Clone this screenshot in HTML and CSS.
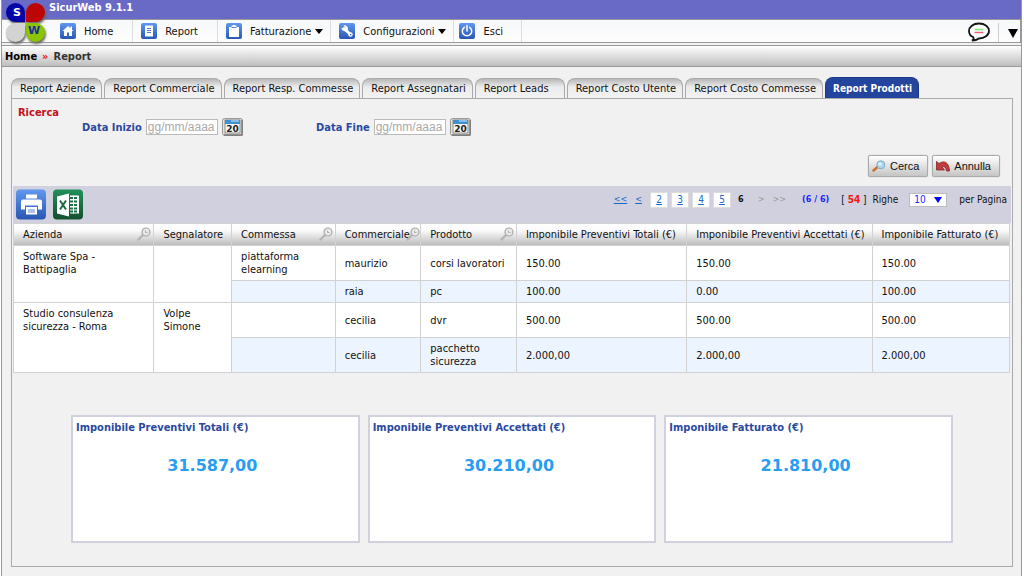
FILE: index.html
```html
<!DOCTYPE html>
<html lang="it">
<head>
<meta charset="utf-8">
<meta name="viewport" content="width=device-width, initial-scale=1">
<title>SicurWeb 9.1.1</title>
<link rel="stylesheet" href="styles.css">
</head>
<body>
<svg width="0" height="0" class="defs" aria-hidden="true">
  <defs>
    <linearGradient id="blue" x1="0" y1="0" x2="0" y2="1"><stop offset="0" stop-color="#6098ee"/><stop offset="1" stop-color="#2857b4"/></linearGradient>
    <linearGradient id="green" x1="0" y1="0" x2="0" y2="1"><stop offset="0" stop-color="#219058"/><stop offset="1" stop-color="#14502e"/></linearGradient>
    <symbol id="lens" viewBox="0 0 14 14"><path d="M1.5 12.5 6 8" stroke="#b4b4b4" stroke-width="2.4" stroke-linecap="round"/><circle cx="9" cy="5" r="4" fill="#e9e9e9" stroke="#a9a9a9" stroke-width="1.2"/><path d="M8.5 3.5v2h2" fill="none" stroke="#aaa" stroke-width=".9"/></symbol>
    <symbol id="calendar" viewBox="0 0 21 18"><rect x=".5" y=".5" width="20" height="17" rx="2" fill="#e4e2dd" stroke="#999"/><path d="M20 2v15H2" fill="none" stroke="#777" stroke-width="1.4"/><rect x="3" y="2" width="15" height="13" fill="#f7f7f7" stroke="#777" stroke-width=".8"/><rect x="3" y="2" width="15" height="4" fill="#4090cf"/><path d="M9 3h8" stroke="#b8dcf5" stroke-width="1.2"/><text x="10.5" y="14" text-anchor="middle" font-family="DejaVu Sans" font-size="9" font-weight="bold" fill="#222">20</text></symbol>
  </defs>
</svg>
<div class="app">
  <header class="titlebar">
    <h1 class="title">SicurWeb 9.1.1</h1>
    <svg class="logo" viewBox="0 0 44 46" role="img" aria-label="SicurWeb">
      <g class="petals">
        <path d="M20 21H11A9.500 9.500 0 1 1 20 12Z" fill="#0606a8"/>
        <path d="M21 21V12A9.500 9.500 0 1 1 30 21Z" fill="#bd0505"/>
        <path d="M20 22V31A9.500 9.500 0 1 1 11 22Z" fill="#d3d3d3"/>
        <path d="M21 22H30A9.500 9.500 0 1 1 21 31Z" fill="#8cc400"/>
      </g>
      <text x="12" y="15" text-anchor="middle" class="logo-letter logo-letter-s">S</text>
      <text x="29" y="33" text-anchor="middle" class="logo-letter logo-letter-w">W</text>
    </svg>
  </header>
  <nav class="menu" aria-label="Menu principale">
    <a class="menu-item" href="#home"><svg class="menu-icon" viewBox="0 0 16 16"><rect width="16" height="16" rx="2" fill="url(#blue)"/><path d="M2.500 8 8 3l2.500 2.200V3.500H12v3.200L13.500 8H12v5H9V9.500H7V13H4V8Z" fill="#fff"/></svg>Home</a>
    <a class="menu-item" href="#report"><svg class="menu-icon" viewBox="0 0 16 16"><rect width="16" height="16" rx="2" fill="url(#blue)"/><path d="M4 2.500h8v11H4Z" fill="#fff"/><path d="M6 5.500h4M6 7.500h4M6 9.500h4" stroke="#487fd4"/></svg>Report</a>
    <button type="button" class="menu-item menu-drop"><svg class="menu-icon" viewBox="0 0 16 16"><rect width="16" height="16" rx="2" fill="url(#blue)"/><path d="M3 4h2.500V2.500h1.500V2h2v.5h1.500V4H13v10H3Z" fill="#fff"/><path d="M5.500 4.500h5" stroke="#487fd4"/></svg>Fatturazione<svg class="caret" viewBox="0 0 8 5"><path d="M0 0h8L4 5Z"/></svg></button>
    <button type="button" class="menu-item menu-drop"><svg class="menu-icon" viewBox="0 0 16 16"><rect width="16" height="16" rx="2" fill="url(#blue)"/><path d="M5 5.500 11.500 11.500" stroke="#fff" stroke-width="3" stroke-linecap="round"/><path d="M2.500 4.500 5 6.500 6.500 5 4.500 2.500A3.500 3.500 0 0 1 9 6.500 3.500 3.500 0 0 1 2.500 4.500Z" fill="#fff"/><circle cx="11.500" cy="11.500" r="2.200" fill="#fff"/><circle cx="11.700" cy="11.700" r=".8" fill="#3569c5"/></svg>Configurazioni<svg class="caret" viewBox="0 0 8 5"><path d="M0 0h8L4 5Z"/></svg></button>
    <a class="menu-item menu-exit" href="#esci"><svg class="menu-icon" viewBox="0 0 16 16"><rect width="16" height="16" rx="2" fill="url(#blue)"/><path d="M5.300 4.300a4.700 4.700 0 1 0 5.400 0M8 2.500v5.500" fill="none" stroke="#fff" stroke-width="1.500" stroke-linecap="round"/></svg>Esci</a>
    <div class="menu-tools">
      <button type="button" class="tool" aria-label="Messaggi"><svg width="22" height="20" viewBox="0 0 22 20"><path d="M4 18.500C6 17.500 6 16 5 15 1.500 13.500 1 11 1 9 1 5 5 1.500 11 1.500S21 5 21 9s-4.500 7.500-10 7.500C9 18 6.500 18.500 4 18.500Z" fill="#fff" stroke="#151515" stroke-width="1.800"/><path d="M6.500 7.500h9" stroke="#79ef70" stroke-width="1.500"/><path d="M6.500 10.500h9" stroke="#f2607c" stroke-width="1.500"/></svg></button>
      <button type="button" class="tool tool-more" aria-label="Altro"><svg width="10" height="9" viewBox="0 0 10 9"><path d="M0 0h10L5 9Z"/></svg></button>
    </div>
  </nav>
  <div class="crumbs"><a href="#home">Home</a><span class="crumb-sep">»</span><span>Report</span></div>
  <main class="content">
    <nav class="tabs" aria-label="Report">
      <a class="tab" href="#aziende">Report Aziende</a>
      <a class="tab" href="#commerciale">Report Commerciale</a>
      <a class="tab" href="#resp">Report Resp. Commesse</a>
      <a class="tab" href="#assegnatari">Report Assegnatari</a>
      <a class="tab tab-wide" href="#leads">Report Leads</a>
      <a class="tab" href="#utente">Report Costo Utente</a>
      <a class="tab" href="#commesse">Report Costo Commesse</a>
      <a class="tab tab-active" href="#prodotti" aria-current="page">Report Prodotti</a>
    </nav>
    <div class="panel">
      <form class="search">
        <h2 class="legend">Ricerca</h2>
        <div class="fields">
          <div class="field field-start"><label for="inizio">Data Inizio</label><input id="inizio" type="text" placeholder="gg/mm/aaaa"><button type="button" class="cal" aria-label="Scegli data inizio"><svg width="21" height="18"><use href="#calendar"/></svg></button></div>
          <div class="field"><label for="fine">Data Fine</label><input id="fine" type="text" placeholder="gg/mm/aaaa"><button type="button" class="cal" aria-label="Scegli data fine"><svg width="21" height="18"><use href="#calendar"/></svg></button></div>
        </div>
        <div class="actions">
          <button type="button" class="btn"><svg width="14" height="12" viewBox="0 0 14 12"><path d="M1.500 10.500 5 7.500" stroke="#c8752d" stroke-width="2.600" stroke-linecap="round"/><circle cx="8.800" cy="4.800" r="4" fill="#a9d8f4" stroke="#86a8bf"/><circle cx="8" cy="4" r="1.800" fill="#dff3ff"/></svg>Cerca</button>
          <button type="button" class="btn"><svg width="14" height="12" viewBox="0 0 14 12"><path d="M.5 1.500 3 3.500C7 .5 13 1 13.500 11L10.500 11C10 7 8 6 6 7L8.500 10H.5Z" fill="#c13c3f" stroke="#842528" stroke-width=".8"/></svg>Annulla</button>
        </div>
      </form>
      <div class="toolbar">
        <button type="button" class="export" aria-label="Stampa"><svg viewBox="0 0 30 30"><rect width="30" height="30" rx="4" fill="url(#blue)"/><path d="M10 5h11v4H10ZM7 10h17q2 0 2 2v8h-4v-4H9v4H5v-8q0-2 2-2Z" fill="#fff"/><path d="M10 17.500h11V25H10Z" fill="#fff"/><path d="M12 20.500h7M12 22.500h7" stroke="#5788d8"/></svg></button>
        <button type="button" class="export" aria-label="Esporta in Excel"><svg viewBox="0 0 30 30"><rect width="30" height="30" rx="4" fill="url(#green)"/><path d="M4 7 16 4V27L4 24Z" fill="#fff"/><path d="M17 6h9v18h-9Z" fill="#fff"/><path d="M17 8.500h7M17 12h7M17 15.500h7M17 19h7M17 22h7" stroke="#1c7044" stroke-width="1.800"/><path d="M20.500 6v18" stroke="#fff"/><path d="m7 11 6 9M13 11l-6 9" stroke="#1c6c42" stroke-width="2"/></svg></button>
        <div class="pager">
          <a class="pg-first" href="#p1">&lt;&lt;</a><a class="pg-prev" href="#p5">&lt;</a>
          <span class="pages"><a href="#p2">2</a><a href="#p3">3</a><a href="#p4">4</a><a href="#p5">5</a></span>
          <b class="pg-now">6</b><span class="off pg-next">&gt;</span><span class="off">&gt;&gt;</span>
          <b class="range">(6 / 6)</b><span class="total">[ <b>54</b> ]</span>
          <label for="righe">Righe</label>
          <span class="select"><select id="righe"><option>10</option><option>20</option><option>50</option></select></span>
          <span>per Pagina</span>
        </div>
      </div>
      <table class="grid">
        <colgroup><col class="c-azienda"><col class="c-segnalatore"><col class="c-commessa"><col class="c-commerciale"><col class="c-prodotto"><col class="c-totali"><col class="c-accettati"><col class="c-fatturato"></colgroup>
        <thead>
          <tr>
            <th scope="col"><div class="head">Azienda<svg class="lens"><use href="#lens"/></svg></div></th>
            <th scope="col">Segnalatore</th>
            <th scope="col"><div class="head">Commessa<svg class="lens"><use href="#lens"/></svg></div></th>
            <th scope="col"><div class="head">Commerciale<svg class="lens"><use href="#lens"/></svg></div></th>
            <th scope="col"><div class="head">Prodotto<svg class="lens"><use href="#lens"/></svg></div></th>
            <th scope="col">Imponibile Preventivi Totali (€)</th>
            <th scope="col">Imponibile Preventivi Accettati (€)</th>
            <th scope="col">Imponibile Fatturato (€)</th>
          </tr>
        </thead>
        <tbody>
          <tr class="tall"><td rowspan="2" class="group">Software Spa - Battipaglia</td><td rowspan="2" class="group"></td><td>piattaforma elearning</td><td>maurizio</td><td>corsi lavoratori</td><td>150.00</td><td>150.00</td><td>150.00</td></tr>
          <tr class="alt"><td></td><td>raia</td><td>pc</td><td>100.00</td><td>0.00</td><td>100.00</td></tr>
          <tr class="tall"><td rowspan="2" class="group">Studio consulenza sicurezza - Roma</td><td rowspan="2" class="group">Volpe Simone</td><td></td><td>cecilia</td><td>dvr</td><td>500.00</td><td>500.00</td><td>500.00</td></tr>
          <tr class="alt tall"><td></td><td>cecilia</td><td>pacchetto sicurezza</td><td>2.000,00</td><td>2.000,00</td><td>2.000,00</td></tr>
        </tbody>
      </table>
      <div class="cards">
        <section class="card"><h2>Imponibile Preventivi Totali (€)</h2><p>31.587,00</p></section>
        <section class="card"><h2>Imponibile Preventivi Accettati (€)</h2><p>30.210,00</p></section>
        <section class="card"><h2>Imponibile Fatturato (€)</h2><p>21.810,00</p></section>
      </div>
    </div>
  </main>
</div>
</body>
</html>
```
FILE: styles.css
```css
* { box-sizing: border-box; }
body { margin: 0; background: #fff; color: #111; font: 11px/13px "DejaVu Sans Condensed", "DejaVu Sans", "Noto Sans", sans-serif; }
h1, h2, p { margin: 0; font-size: inherit; }
a { color: inherit; text-decoration: none; }
button { margin: 0; padding: 0; border: 0; background: none; color: inherit; font: inherit; cursor: pointer; }
svg { display: block; flex: none; }
.defs { position: absolute; }
.app { display: flex; flex-direction: column; min-height: 100vh; margin: 0 2px 0 1px; border: solid #999; border-width: 0 1px; background: #f1f1f1; }

.titlebar { position: relative; height: 19px; background: #6969c6; color: #fff; }
.title { padding-left: 47px; line-height: 15px; font-weight: bold; }
.logo { position: absolute; left: 3px; top: 1px; width: 44px; height: 46px; z-index: 1; overflow: visible; }
.petals { filter: drop-shadow(1px 2px 1px #666); }
.logo-letter { font: bold 11px "DejaVu Sans", sans-serif; }
.logo-letter-s { fill: #fff; }
.logo-letter-w { fill: #17329b; }

.menu { display: flex; height: 24px; border: 1px solid #999; border-left: 0; background: linear-gradient(#f7f8fa, #fdfdfd); padding-left: 50px; }
.menu-item { display: flex; align-items: center; gap: 8px; padding: 0 19px 0 8px; border-right: 1px solid #ddd; white-space: nowrap; }
.menu-icon { width: 16px; height: 16px; }
.menu-drop { padding-right: 7px; }
.caret { width: 8px; height: 5px; margin-left: -4px; }
.menu-exit { padding: 0 18px 0 5px; }
.menu-tools { display: flex; align-items: flex-end; margin-left: auto; }
.tool { padding-right: 8px; }
.tool-more { padding: 6px 2px 4px 9px; border-left: 1px solid #ccc; }

.crumbs { display: flex; align-items: center; gap: 5px; height: 22px; margin-top: 2px; padding-left: 3px; border: solid #999; border-width: 1px 0; background: linear-gradient(#fff, #bebebe); font-weight: bold; color: #333; }
.crumbs a { color: #000; }
.crumb-sep { color: #e11; }

.content { display: flex; flex: 1; flex-direction: column; padding: 10px 8px 9px 9px; }
.tabs { display: flex; align-items: flex-end; gap: 2px; height: 21px; }
.tab { height: 20px; padding: 3px 6px 3px 8px; border: 1px solid #aaa; border-bottom: 0; border-radius: 8px 8px 0 0; background: linear-gradient(#b8b8b8, #ececec 8px, #f2f2f2); white-space: nowrap; }
.tab-wide { padding-right: 15px; }
.tab-active { height: 22px; padding: 4px 6px 4px 7px; border-color: #1c3884; background: #24459d; color: #fff; font-size: 10px; font-weight: bold; margin-bottom: -1px; }
.panel { flex: 1; padding: 0 1px; border: 1px solid #aaa; }

.search { display: flex; flex-direction: column; height: 87px; padding: 7px 11px 9px 5px; }
.legend { color: #c5101b; }
.fields { display: flex; padding-left: 64px; margin-top: -1px; color: #2b49a0; font-weight: bold; }
.field { display: flex; align-items: center; gap: 4px; }
.field-start { width: 234px; }
.field input { width: 72px; height: 16px; padding: 0 1px; border: 1px solid #bbb; background: #fff; font: 12px/14px "Liberation Sans", sans-serif; }
.field input::placeholder { color: #aaa; }
.actions { display: flex; justify-content: flex-end; gap: 4px; margin-top: auto; }
.btn { display: flex; align-items: center; gap: 4px; height: 22px; padding: 0 8px 0 3px; border: 1px solid #aaa; border-radius: 2px; background: linear-gradient(#fff, #c5c5c5); color: #111; font: 11px/13px "Liberation Sans", sans-serif; box-shadow: 0 0 1px #999; }

.toolbar { display: flex; align-items: flex-start; gap: 7px; height: 37px; padding: 3px 4px 0 3px; background: #d1d0de; }
.export, .export svg { width: 30px; height: 31px; }
.pager { display: flex; align-items: center; margin: 2px 0 0 auto; height: 17px; font-size: 10px; white-space: nowrap; }
.pager a { color: #1769c9; text-decoration: underline; }
.pg-first, .pg-prev { margin-right: 8px; font-size: 9px; }
.pages { display: flex; gap: 3px; }
.pages a { width: 18px; height: 16px; background: #fff; border: 1px solid #ddd; text-align: center; line-height: 14px; }
.pg-now { margin: 0 14px 0 7px; font-size: 9px; }
.off { color: #999; font-size: 9px; }
.pg-next { margin-right: 8px; }
.range { margin-left: 16px; color: #22f; font-size: 9px; }
.total { margin: 0 6px 0 12px; }
.total b { color: #f11; }
.select { position: relative; margin: 0 12px 0 11px; }
.select::after { content: ""; position: absolute; right: 5px; top: 4px; border: 4px solid transparent; border-top: 6px solid #00f; border-bottom: 0; pointer-events: none; }
.select select { display: block; appearance: none; width: 38px; height: 14px; padding: 0 4px; border: 1px solid #bbb; border-radius: 0; background: #fff; color: #22f; font: inherit; line-height: 12px; }

.grid { width: calc(100% - 1px); table-layout: fixed; border-collapse: collapse; background: #fff; }
.c-azienda { width: 14.1%; }
.c-segnalatore { width: 7.8%; }
.c-commessa { width: 10.4%; }
.c-commerciale { width: 8.6%; }
.c-prodotto { width: 9.6%; }
.c-totali { width: 17.1%; }
.c-accettati { width: 18.6%; }
.c-fatturato { width: 13.8%; }
.grid th, .grid td { padding: 4px 9px; border: 1px solid #d2d2d2; text-align: left; font-weight: normal; }
.grid thead { background: linear-gradient(#fff, #fafafa 30%, #b9b9b9); }
.grid th { height: 22px; white-space: nowrap; }
.grid td { height: 22px; vertical-align: middle; }
.grid .tall td { height: 35px; }
.grid td.group { vertical-align: top; }
.alt td { background: #ebf4ff; }
.head { display: flex; justify-content: space-between; margin-right: -7px; }
.lens { width: 14px; height: 14px; margin: -1px 0 0 -4px; }

.cards { display: grid; grid-template-columns: repeat(3, 1fr); gap: 8px; margin: 42px 58px 22px; }
.card { height: 128px; padding: 4px 3px; border: 2px solid #d1d0de; background: #fff; }
.card h2 { color: #2b49a0; }
.card p { margin-top: 22px; padding-right: 6px; color: #2a9df0; font: bold 16px/20px "DejaVu Sans", sans-serif; text-align: center; }
```
